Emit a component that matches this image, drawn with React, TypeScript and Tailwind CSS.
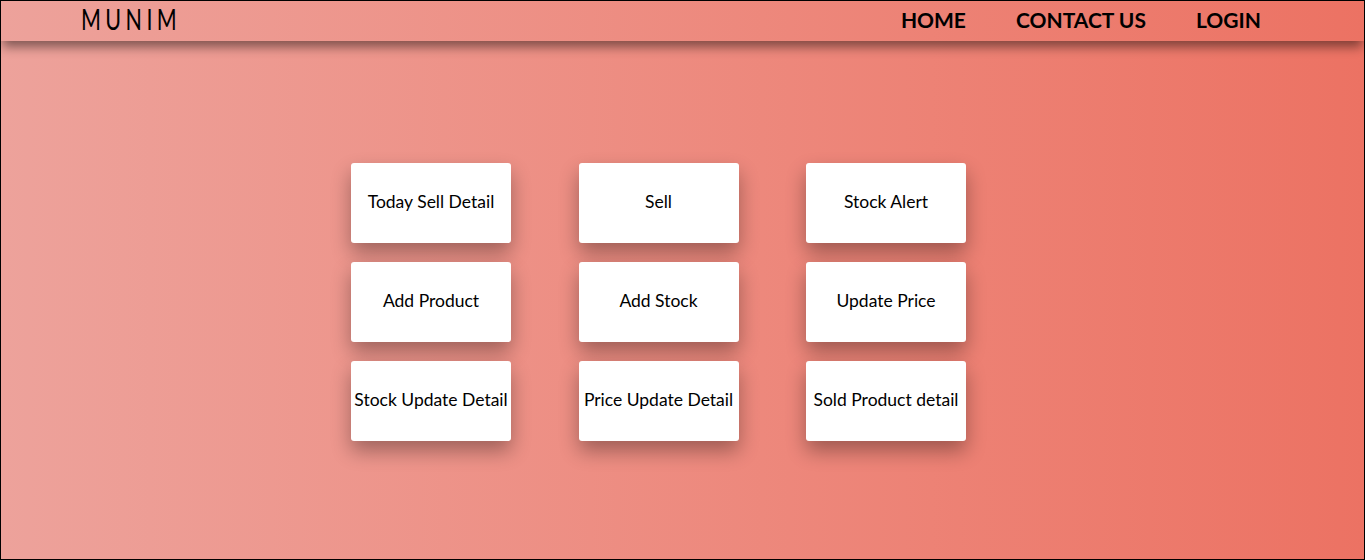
import React from 'react';

const cards = [
  'Today Sell Detail',
  'Sell',
  'Stock Alert',
  'Add Product',
  'Add Stock',
  'Update Price',
  'Stock Update Detail',
  'Price Update Detail',
  'Sold Product detail',
];

export default function App() {
  return <div className="box-border h-[560px] w-full border border-black bg-gradient-to-r from-[#eda29b] to-[#ec7263] font-['Lato',sans-serif] text-black">
    {/* Header */}
    <header className="flex h-[40px] items-center justify-between shadow-[0_8px_10px_-2px_rgba(0,0,0,0.45)]">
      <div className="pb-[2px] pl-[80px]">
        <span className="inline-block origin-left scale-x-[0.74] text-[29px] font-normal tracking-[6px] text-black leading-none">MUNIM</span>
      </div>
      <nav className="flex items-center gap-[50px] pb-[4px] pr-[103px]">
        <a href="#" className="text-[21px] font-bold leading-none">HOME</a>
        <a href="#" className="text-[21px] font-bold leading-none">CONTACT US</a>
        <a href="#" className="text-[21px] font-bold leading-none">LOGIN</a>
      </nav>
    </header>

    {/* Menu cards */}
    <div className="pl-[350px] pt-[122px]">
      <div className="grid w-fit grid-cols-[160px_160px_160px] gap-x-[67.5px] gap-y-[19px]">
        {cards.map(c => <div key={c} className="flex h-[80px] items-center justify-center rounded-[3px] bg-white pb-[2px] text-[17.5px] shadow-[0_10px_20px_rgba(0,0,0,0.33)] whitespace-nowrap">
          {c}
        </div>)}
      </div>
    </div>
  </div>;
}
